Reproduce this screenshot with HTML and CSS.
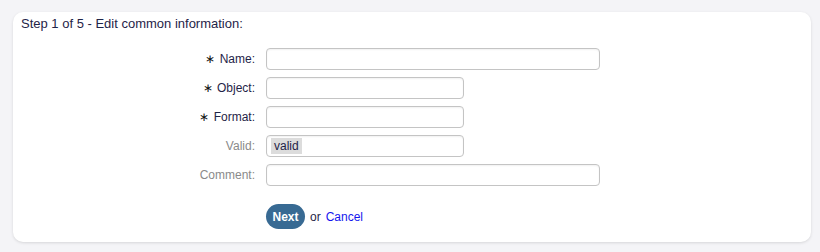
FILE: index.html
```html
<!DOCTYPE html>
<html lang="en">
<head>
    <meta charset="UTF-8">
    <title>Edit common information</title>
    <link rel="stylesheet" href="styles.css">
</head>
<body>

<div class="panel">
    <div class="panel-title">Step 1 of 5 - Edit common information:</div>
    <form class="edit-form">
        <label for="name" class="required"><span class="star">&lowast;</span> Name:</label>
        <input type="text" id="name" class="wide">

        <label for="object" class="required"><span class="star">&lowast;</span> Object:</label>
        <input type="text" id="object" class="narrow">

        <label for="format" class="required"><span class="star">&lowast;</span> Format:</label>
        <input type="text" id="format" class="narrow">

        <label for="valid">Valid:</label>
        <div class="select narrow" id="valid"><span class="tag">valid</span></div>

        <label for="comment">Comment:</label>
        <input type="text" id="comment" class="wide">

        <div class="actions">
            <button type="button" class="next">Next</button>
            <span>or</span>
            <a href="#" class="cancel">Cancel</a>
        </div>
    </form>
</div>

</body>
</html>
```

FILE: styles.css
```css
body {
    margin: 0;
    padding: 12px 9px 11px 13px;
    background: #f4f4f7;
    font-family: 'Liberation Sans', Arial, sans-serif;
    font-size: 12px;
}
.panel {
    background: #fff;
    border-radius: 10px;
    box-shadow: 0 1px 3px rgba(0, 0, 0, 0.12);
    padding: 5px 8px 13px;
}
.panel-title {
    color: #1f2448;
    font-size: 13px;
    line-height: 14px;
}
.edit-form {
    display: grid;
    grid-template-columns: 234px 1fr;
    column-gap: 11px;
    row-gap: 7px;
    margin-top: 17px;
}
.edit-form label {
    text-align: right;
    line-height: 22px;
    height: 22px;
    color: #8a8a8a;
}
.edit-form label.required {
    color: #1f2448;
}
.star {
    color: #111;
    font-size: 12px;
    line-height: 1;
    margin-right: 1px;
}
.edit-form input, .select {
    height: 22px;
    box-sizing: border-box;
    border: 1px solid #c4c4c4;
    border-radius: 4px;
    background: #fff;
    box-shadow: inset 0 1px 2px rgba(0, 0, 0, 0.06);
    padding: 0 4px;
    font: inherit;
}
.wide {
    width: 334px;
}
.narrow {
    width: 198px;
}
.select {
    display: flex;
    align-items: center;
}
.tag {
    background: #dcdcdc;
    color: #1f2448;
    padding: 1px 3px;
    line-height: 14px;
}
.actions {
    grid-column: 2;
    display: flex;
    align-items: center;
    gap: 5px;
    margin-top: 11px;
    height: 25px;
    color: #1f2448;
}
.next {
    background: #386a93;
    color: #fff;
    border: none;
    border-radius: 13px;
    width: 39px;
    height: 25px;
    padding: 0;
    font: inherit;
    font-weight: bold;
}
.cancel {
    color: #1515ee;
    text-decoration: none;
}
```
